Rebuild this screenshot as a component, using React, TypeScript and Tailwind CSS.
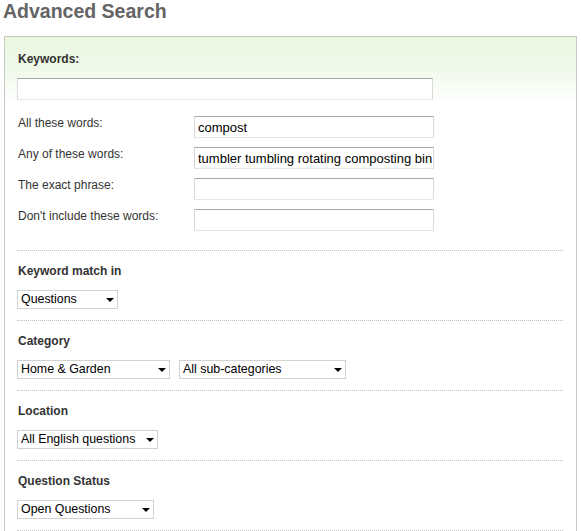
import React from "react";

const font = { fontFamily: '"Liberation Sans", Arial, sans-serif' };

function Arrow() {
  return (
    <svg width="8" height="4" viewBox="0 0 8 4" className="shrink-0 block">
      <path d="M0 0 L8 0 L4 4 Z" fill="#000" />
    </svg>
  );
}

function FakeSelect({ label, width }: { label: string; width: string }) {
  return (
    <div
      className={`${width} h-[19px] border border-[#d2d2d2] bg-white flex items-start justify-between pl-[3px] pr-[3px]`}
    >
      <span className="text-[12.4px] leading-[15px] pt-px text-black whitespace-nowrap">{label}</span>
      <div className="h-[17px] flex items-center pt-px">
        <Arrow />
      </div>
    </div>
  );
}

function TextInput({ value, width }: { value?: string; width: string }) {
  return (
    <input
      readOnly
      defaultValue={value ?? ""}
      className={`${width} block h-[22px] border border-t-[#a8a8a8] border-l-[#d9d9d9] border-r-[#d9d9d9] border-b-[#e5e5e5] bg-white pl-[3px] text-[13px] leading-[20px] text-black outline-none`}
      style={font}
    />
  );
}

function Row({ label, value }: { label: string; value?: string }) {
  return (
    <div className="flex items-start h-[22px]">
      <div className="w-[177px] pl-px text-[12px] leading-[14px] text-[#333]">{label}</div>
      <TextInput value={value} width="w-[240px]" />
    </div>
  );
}

function Section({ title, children }: { title: string; children: React.ReactNode }) {
  return (
    <div className="border-t border-dotted border-[#c2c2c2] pt-[12px] pb-[11px]">
      <div className="pl-px text-[12px] leading-[16px] font-bold text-[#333]">{title}</div>
      <div className="mt-[11px] flex gap-[9px]">{children}</div>
    </div>
  );
}

export default function App() {
  return (
    <div className="bg-white min-h-[531px]" style={font}>
      <h1 className="pl-[3px] text-[19.5px] leading-[22px] font-bold text-[#646464]">Advanced Search</h1>
      <div className="mt-[14px] ml-[4px] w-[573px] border border-[#c6c9c6] border-b-0 bg-[linear-gradient(180deg,#e9f7df_0px,#f1faeb_35px,#ffffff_66px)] pt-[14px] pl-[12px] pr-[13px] pb-[40px]">
        <div className="pl-px text-[12px] leading-[16px] font-bold text-[#333]">Keywords:</div>
        <div className="mt-[11px]">
          <TextInput width="w-[416px]" />
        </div>
        <div className="mt-[16px] flex flex-col gap-[9px]">
          <Row label="All these words:" value="compost" />
          <Row label="Any of these words:" value="tumbler tumbling rotating composting bin" />
          <Row label="The exact phrase:" />
          <Row label="Don't include these words:" />
        </div>
        <div className="mt-[19px]">
          <Section title="Keyword match in">
            <FakeSelect label="Questions" width="w-[101px]" />
          </Section>
          <Section title="Category">
            <FakeSelect label="Home & Garden" width="w-[153px]" />
            <FakeSelect label="All sub-categories" width="w-[167px]" />
          </Section>
          <Section title="Location">
            <FakeSelect label="All English questions" width="w-[141px]" />
          </Section>
          <Section title="Question Status">
            <FakeSelect label="Open Questions" width="w-[137px]" />
          </Section>
          <div className="border-t border-dotted border-[#c2c2c2] h-[20px]" />
        </div>
      </div>
    </div>
  );
}
